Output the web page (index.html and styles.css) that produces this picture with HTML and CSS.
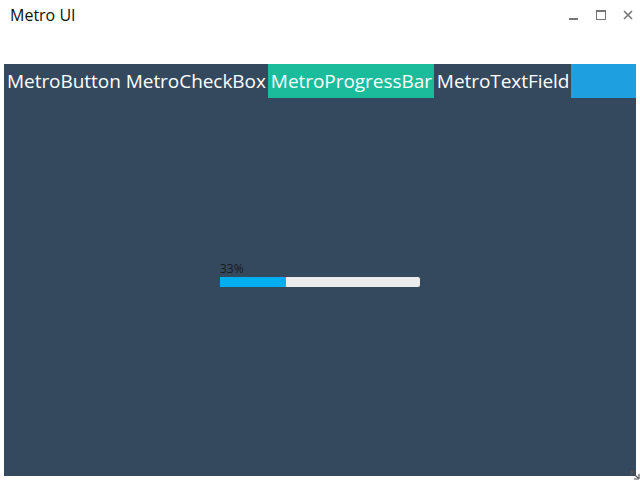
FILE: index.html
```html
<!DOCTYPE html>
<html>
<head>
<meta charset="utf-8">
<link rel="stylesheet" href="styles.css">
</head>
<body>
<div class="window">
  <div class="titlebar">
    <div class="title">Metro UI</div>
    <div class="controls">
      <svg class="ctl" width="10" height="10" viewBox="0 0 10 10"><rect x="0" y="8" width="9" height="2" fill="#777"/></svg>
      <svg class="ctl" width="10" height="10" viewBox="0 0 10 10"><rect x="0.5" y="0.5" width="9" height="9" fill="none" stroke="#777"/><rect x="0" y="0" width="10" height="2" fill="#777"/></svg>
      <svg class="ctl" width="10" height="10" viewBox="0 0 10 10"><path d="M1 1 L9 9 M9 1 L1 9" stroke="#777" stroke-width="1.6"/></svg>
    </div>
  </div>
  <div class="panel">
    <div class="tabs">
      <div class="tab">MetroButton</div>
      <div class="tab">MetroCheckBox</div>
      <div class="tab active">MetroProgressBar</div>
      <div class="tab">MetroTextField</div>
      <div class="tab-fill"></div>
    </div>
    <div class="content">
      <div class="progress">
        <div class="label">33%</div>
        <div class="track"><div class="fill" style="width:33%"></div></div>
      </div>
    </div>
  </div>
  <svg class="grip" width="10" height="10" viewBox="0 0 10 10"><path d="M1 1 H6 M1 1 V6 M9 9 H4 M9 9 V4 M2 2 L8 8" stroke="#555" stroke-width="1.2" fill="none"/></svg>
</div>
</body>
</html>
```
FILE: styles.css
```css
html, body {
  margin: 0;
  padding: 0;
  background: #ffffff;
}
.window {
  width: 640px;
  height: 480px;
  display: flex;
  flex-direction: column;
  position: relative;
  font-family: "Open Sans", "Noto Sans", sans-serif;
}
.titlebar {
  height: 64px;
  display: flex;
  justify-content: space-between;
  align-items: flex-start;
}
.title {
  font-size: 16px;
  color: #111;
  padding: 3px 0 0 10px;
  line-height: 24px;
}
.controls {
  display: flex;
  gap: 17px;
  padding: 10px 7px 0 0;
}
.ctl {
  display: block;
}
.panel {
  margin: 0 4px;
  height: 412px;
  background: #34495e;
  display: flex;
  flex-direction: column;
}
.tabs {
  display: flex;
  height: 34px;
}
.tab {
  color: #ffffff;
  font-size: 19px;
  line-height: 34px;
  padding: 0 2px 0 3px;
  white-space: nowrap;
  letter-spacing: -0.05px;
}
.tab.active {
  background: #1abc9c;
}
.tab-fill {
  width: 66px;
  margin-left: auto;
  background: #1e9fe0;
}
.content {
  flex: 1;
  display: flex;
  justify-content: center;
  padding-top: 162px;
}
.progress {
  width: 200px;
}
.label {
  font-size: 12px;
  color: #1a1a1a;
  line-height: 17px;
}
.track {
  height: 10px;
  background: #ececec;
  border-radius: 0 2px 2px 0;
  overflow: hidden;
}
.fill {
  height: 100%;
  background: #00aeef;
}
.grip {
  position: absolute;
  right: 0;
  bottom: 0;
}
```
